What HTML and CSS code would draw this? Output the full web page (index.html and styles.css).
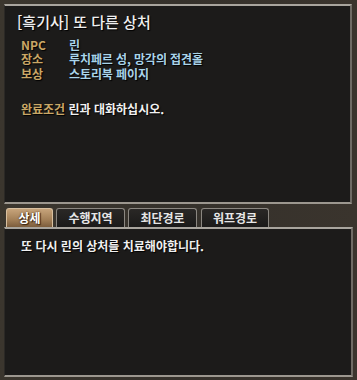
FILE: index.html
```html
<!DOCTYPE html>
<html lang="ko">
<head>
<meta charset="utf-8">
<link rel="stylesheet" href="styles.css">
</head>
<body>
<div class="window">
  <section class="panel top">
    <h1 class="title">[흑기사] 또 다른 상처</h1>
    <dl class="info">
      <div class="row"><dt>NPC</dt><dd>린</dd></div>
      <div class="row"><dt>장소</dt><dd>루치페르 성, 망각의 접견홀</dd></div>
      <div class="row"><dt>보상</dt><dd>스토리북 페이지</dd></div>
    </dl>
    <p class="cond"><span class="label">완료조건</span> 린과 대화하십시오.</p>
  </section>
  <nav class="tabs">
    <span class="tab active">상세</span>
    <span class="tab">수행지역</span>
    <span class="tab">최단경로</span>
    <span class="tab">워프경로</span>
  </nav>
  <section class="panel bottom">
    <p class="desc">또 다시 린의 상처를 치료해야합니다.</p>
  </section>
</div>
</body>
</html>
```
FILE: styles.css
```css
* { box-sizing: border-box; }
html, body { margin: 0; padding: 0; }
body {
  width: 357px;
  height: 380px;
  background: linear-gradient(90deg, #3b362e, #35312b 50%, #3a342d);
  font-family: "Noto Sans CJK KR", "Noto Sans", sans-serif;
  color: #ebebeb;
  overflow: hidden;
}
.window {
  padding: 4px 4px 0 4px;
  display: flex;
  flex-direction: column;
}
.panel {
  background: #1c1b1a;
  border-top: 2px solid #a9a59e;
  border-left: 1px solid #2b2926;
  border-right: 2px solid #6f6b65;
  border-bottom: 2px solid #9c978f;
}
.top {
  width: 348px;
  height: 200px;
  padding: 6px 0 0 12px;
}
.title {
  margin: 0;
  font-size: 15px;
  font-weight: 500;
  line-height: 20px;
  color: #f0f0f0;
  letter-spacing: 0;
  text-shadow: 1px 1px 1px #000;
}
.info {
  margin: 6px 0 0 4px;
}
.row {
  display: flex;
  line-height: 14px;
  height: 14.3px;
  font-size: 12px;
  font-weight: 700;
  text-shadow: 1px 1px 1px #000;
}
.row dt {
  width: 48px;
  color: #c9a766;
}
.row dd {
  margin: 0;
  color: #a9d4ea;
  letter-spacing: -0.1px;
}
.cond {
  margin: 21px 0 0 4px;
  font-size: 12px;
  font-weight: 700;
  line-height: 14px;
  color: #f2f2f2;
  letter-spacing: 0;
  text-shadow: 1px 1px 1px #000;
}
.cond .label { color: #c9a766; }
.tabs {
  display: flex;
  gap: 3px;
  margin: 4px 0 0 2px;
  height: 19px;
  position: relative;
  z-index: 1;
}
.tab {
  width: 69px;
  height: 19px;
  border: 1px solid #8b8781;
  border-bottom: none;
  border-radius: 3px 3px 0 0;
  background: linear-gradient(#2a2826, #1b1a19);
  font-size: 12px;
  font-weight: 700;
  line-height: 18px;
  text-align: center;
  color: #e6e6e6;
  letter-spacing: 0;
}
.tab.active {
  width: 47px;
  border-color: #d8c0a0;
  background: linear-gradient(#c7a47b, #a27f57 60%, #7c5d3d);
  color: #ffffff;
  text-shadow: 0 0 2px #3a2410, 1px 1px 1px #3a2410;
}
.tabs .tab:last-child { width: 68px; margin-left: 1px; }
.bottom {
  width: 349px;
  height: 150px;
  padding: 10px 0 0 16px;
}
.desc {
  margin: 0;
  font-size: 12px;
  font-weight: 700;
  line-height: 14px;
  color: #f0f0f0;
  letter-spacing: 0;
  text-shadow: 1px 1px 1px #000;
}
```
